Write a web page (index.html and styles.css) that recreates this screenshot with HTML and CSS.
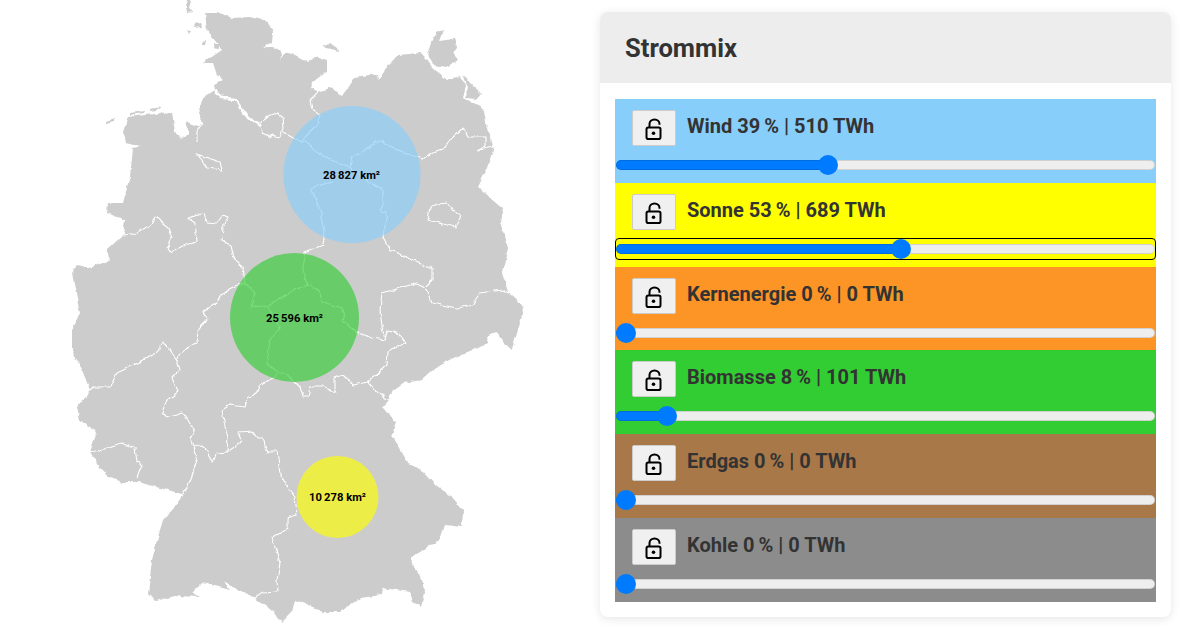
FILE: index.html
```html
<!DOCTYPE html>
<html>
<head>
  <title>Strommix</title>
  <link rel="stylesheet" href="styles.css">
</head>
<body>

  <svg class="map" viewBox="0 0 600 630" width="600" height="630">
    <defs>
      <!-- roughens the straight segments into a coastline -->
      <filter id="rough" filterUnits="userSpaceOnUse" x="0" y="0" width="600" height="630">
        <feTurbulence type="fractalNoise" baseFrequency="0.11" numOctaves="3" seed="4"/>
        <feDisplacementMap in="SourceGraphic" scale="5" xChannelSelector="R" yChannelSelector="G"/>
      </filter>
    </defs>

    <g filter="url(#rough)">
      <!-- Germany -->
      <path class="land" d="M205 12L217 12L232 18L250 17L268 22L273 32L272 42L263 47L280 48L282 55L280 60L287 52L307 62L317 57L327 60L327 72L312 82L310 88L318 92L330 88L343 95L355 77L377 74L378 80L393 60L398 55L420 53L427 60L432 67L447 80L460 76L466 86L463 98L485 110L488 128L493 150L488 167L478 187L503 208L500 223L508 248L502 273L508 292L522 305L523 313L518 330L512 350L503 342L497 333L487 335L488 343L470 352L448 360L433 370L422 380L403 383L393 390L388 400L382 407L397 422L392 435L408 463L418 467L437 487L452 497L463 510L462 527L445 525L440 540L410 558L422 580L425 593L422 607L413 602L410 592L383 588L382 595L360 598L340 612L323 612L295 600L292 612L282 622L275 612L255 598L223 582L230 590L215 586L202 583L192 593L200 597L175 596L155 601L148 593L152 560L160 530L163 520L175 507L183 494L160 488L138 482L123 482L110 478L100 467L90 452L97 432L80 420L77 407L90 390L82 370L72 350L72 330L77 320L80 313L72 273L78 265L90 268L110 260L107 250L123 235L125 220L107 213L108 203L123 203L130 177L133 148L140 146L125 143L123 132L128 117L172 112L175 132L182 138L188 132L185 122L197 127L203 123L198 113L203 98L215 90L214 84L223 80L217 75L213 63L203 63L222 50L218 43L207 30Z"/>
      <path class="land" d="M432 43L437 32L443 30L439 40L455 38L457 47L453 52L458 60L447 67L433 65L428 55Z"/>
      <path class="land" d="M462 75L470 82L482 93L477 99L465 98L469 88Z"/>
      <path class="land" d="M323 47L330 43L337 48L338 52L328 49Z"/>
      <path class="land" d="M187 0L191 1L189 8L194 12L187 13L186 7Z"/>
      <path class="land" d="M193 24L200 23L202 27L194 28Z"/>
      <path class="land" d="M203 42L207 41L206 45L203 45Z"/>
      <path class="land" d="M214 44L221 44L218 49L213 48Z"/>
      <path class="land" d="M187 30L191 31L189 34Z"/>
      <path class="land" d="M106 122L115 119L114 122L106 124Z"/>
      <path class="land" d="M130 113L145 111L144 113L130 115Z"/>
      <path class="land" d="M150 109L160 107L160 109L150 111Z"/>

      <!-- Elbe and Weser -->
      <path class="river" d="M215 90L223 98L235 99L248 118L260 126"/>
      <path class="border" d="M197 142L197 131L203 123"/>

      <!-- Borders between the states -->
      <path class="border" d="M260 127L263 133L268 137L273 135L280 137L283 128L282 117L278 113L268 117L260 123Z"/>
      <path class="border" d="M197 154L208 158L220 162L222 170L207 168L202 160Z"/>
      <path class="border" d="M430 207L437 203L447 202L460 217L455 227L428 220Z"/>
      <path class="border" d="M283 132L293 138L302 142L308 142L313 150L327 158L340 163L350 167L352 157L360 153L375 143L382 142L393 148L408 154L422 159L433 152L445 148L452 138L463 128L468 137L485 137L485 147L478 151L492 147"/>
      <path class="border" d="M318 92L310 100L312 110L320 115L318 125L305 137L302 142"/>
      <path class="border" d="M333 182L310 188L317 200L322 217L325 233L323 245L305 252L302 267L307 285L318 290L322 302L342 308L345 315L343 320L358 333L372 338L385 340"/>
      <path class="border" d="M350 167L368 182L383 190L383 203L380 212L387 213L383 237L390 250L407 257L432 268L432 280L425 287L432 303L457 308L472 305L480 293L503 290L522 300"/>
      <path class="border" d="M425 287L417 283L393 290L382 293L380 310L382 327L385 340L387 330L397 332L405 343L388 352L387 365L368 382L380 395L388 400"/>
      <path class="border" d="M368 382L353 385L343 375L335 378L335 392L323 387L310 387L308 397L303 397L300 387L290 377L278 372L273 378L260 385L257 393L248 398L245 407L230 405L222 410L225 427L228 437L227 452L217 453L213 462L207 452L203 445L193 447"/>
      <path class="border" d="M307 285L290 292L268 307L258 305L250 308L255 293L245 283L235 287L220 295L217 303L202 312L208 320L198 330L197 342L180 353L177 360L168 347L162 342L157 352L140 362L117 373L110 387L93 387L90 390"/>
      <path class="border" d="M268 307L280 327L270 340L267 363L278 372"/>
      <path class="border" d="M245 283L243 267L233 257L230 245L222 240L223 227L228 217L223 215L217 223L207 222L205 213L188 218L195 223L197 242L185 245L170 252L167 248L172 238L168 227L155 217L150 225L137 233L123 235"/>
      <path class="border" d="M177 360L180 370L172 378L178 392L167 400L162 412L167 417L182 412L188 420L195 433L190 438L197 460L188 487L183 494"/>
      <path class="border" d="M89 452L103 450L120 443L135 448L137 462L142 465L137 478"/>
      <path class="border" d="M227 452L242 442L238 433L253 432L257 438L263 438L267 452L277 452L280 473L287 487L295 497L297 515L287 518L287 528L272 538L280 563L277 580L278 592L263 593L255 598"/>
    </g>

    <circle class="area area-wind" cx="352" cy="174.500" r="68.500"/>
    <circle class="area area-biomass" cx="294.500" cy="317.500" r="64.500"/>
    <circle class="area area-solar" cx="337.500" cy="497" r="41"/>
    <text class="area-label" x="351.500" y="179">28&#8201;827 km²</text>
    <text class="area-label" x="294.500" y="322">25&#8201;596 km²</text>
    <text class="area-label" x="337.500" y="501">10&#8201;278 km²</text>
  </svg>

  <section class="panel">
    <header class="panel-header">
      <h2>Strommix</h2>
    </header>
    <div class="panel-body">

      <div class="source wind">
        <div class="source-head">
          <button class="lock" type="button">
            <svg viewBox="0 0 24 24" width="24" height="24"><rect x="5.500" y="9.500" width="14" height="11.500" rx="1.800"/><path d="M8.500 9.500V6a5 4.600 0 0 1 10 0v.7"/><circle class="lock-dot" cx="12.500" cy="15.200" r="1.800"/></svg>
          </button>
          <span class="source-label">Wind 39&#8201;% | 510 TWh</span>
        </div>
        <input class="slider" type="range" min="0" max="100" step="0.1" value="38.9" style="--v:.389">
      </div>

      <div class="source sun">
        <div class="source-head">
          <button class="lock" type="button">
            <svg viewBox="0 0 24 24" width="24" height="24"><rect x="5.500" y="9.500" width="14" height="11.500" rx="1.800"/><path d="M8.500 9.500V6a5 4.600 0 0 1 10 0v.7"/><circle class="lock-dot" cx="12.500" cy="15.200" r="1.800"/></svg>
          </button>
          <span class="source-label">Sonne 53&#8201;% | 689 TWh</span>
        </div>
        <input class="slider is-focused" type="range" min="0" max="100" step="0.1" value="53" style="--v:.53">
      </div>

      <div class="source nuclear">
        <div class="source-head">
          <button class="lock" type="button">
            <svg viewBox="0 0 24 24" width="24" height="24"><rect x="5.500" y="9.500" width="14" height="11.500" rx="1.800"/><path d="M8.500 9.500V6a5 4.600 0 0 1 10 0v.7"/><circle class="lock-dot" cx="12.500" cy="15.200" r="1.800"/></svg>
          </button>
          <span class="source-label">Kernenergie 0&#8201;% | 0 TWh</span>
        </div>
        <input class="slider" type="range" min="0" max="100" step="0.1" value="0" style="--v:0">
      </div>

      <div class="source biomass">
        <div class="source-head">
          <button class="lock" type="button">
            <svg viewBox="0 0 24 24" width="24" height="24"><rect x="5.500" y="9.500" width="14" height="11.500" rx="1.800"/><path d="M8.500 9.500V6a5 4.600 0 0 1 10 0v.7"/><circle class="lock-dot" cx="12.500" cy="15.200" r="1.800"/></svg>
          </button>
          <span class="source-label">Biomasse 8&#8201;% | 101 TWh</span>
        </div>
        <input class="slider" type="range" min="0" max="100" step="0.1" value="7.9" style="--v:.079">
      </div>

      <div class="source gas">
        <div class="source-head">
          <button class="lock" type="button">
            <svg viewBox="0 0 24 24" width="24" height="24"><rect x="5.500" y="9.500" width="14" height="11.500" rx="1.800"/><path d="M8.500 9.500V6a5 4.600 0 0 1 10 0v.7"/><circle class="lock-dot" cx="12.500" cy="15.200" r="1.800"/></svg>
          </button>
          <span class="source-label">Erdgas 0&#8201;% | 0 TWh</span>
        </div>
        <input class="slider" type="range" min="0" max="100" step="0.1" value="0" style="--v:0">
      </div>

      <div class="source coal">
        <div class="source-head">
          <button class="lock" type="button">
            <svg viewBox="0 0 24 24" width="24" height="24"><rect x="5.500" y="9.500" width="14" height="11.500" rx="1.800"/><path d="M8.500 9.500V6a5 4.600 0 0 1 10 0v.7"/><circle class="lock-dot" cx="12.500" cy="15.200" r="1.800"/></svg>
          </button>
          <span class="source-label">Kohle 0&#8201;% | 0 TWh</span>
        </div>
        <input class="slider" type="range" min="0" max="100" step="0.1" value="0" style="--v:0">
      </div>

    </div>
  </section>

</body>
</html>
```
FILE: styles.css
```css
body {
  font-family: Roboto, "Liberation Sans", sans-serif;
  background-color: white;
  color: #333;
  margin: 0;
  display: flex;
  align-items: flex-start;
  height: 630px;
  overflow: hidden;
}

.map {
  flex: none;
  display: block;
}

.land {
  fill: #ccc;
}

.river {
  fill: none;
  stroke: white;
  stroke-width: 2.500;
  stroke-linejoin: round;
}

.border {
  fill: none;
  stroke: white;
  stroke-width: 1.100;
  stroke-linejoin: round;
}

.area {
  fill-opacity: 0.65;
}

.area-wind {
  fill: #87cefa;
}

.area-biomass {
  fill: #32cd32;
}

.area-solar {
  fill: #ffff00;
}

.area-label {
  font-size: 11.200px;
  font-weight: 700;
  fill: black;
  text-anchor: middle;
}

.panel {
  flex: none;
  width: 571px;
  margin-top: 12px;
  background-color: white;
  border-radius: 8px;
  box-shadow: 0 2px 10px rgba(0, 0, 0, 0.1);
  overflow: hidden;
}

.panel-header {
  background-color: #ededed;
  height: 71px;
  display: flex;
  align-items: center;
  padding-left: 25px;
}

.panel-header h2 {
  margin: 0;
  font-size: 25.600px;
  font-weight: 700;
}

.panel-body {
  padding: 16px 15px 15px;
}

.source {
  height: 83.800px;
  padding: 11px 1px 0;
  box-sizing: border-box;
}

.wind { background-color: #87cefa; }
.sun { background-color: #ffff00; }
.nuclear { background-color: #fc9426; }
.biomass { background-color: #32cd32; }
.gas { background-color: #a97848; }
.coal { background-color: #8c8c8c; }

.source-head {
  display: flex;
  align-items: center;
  gap: 11px;
  padding-left: 16px;
  height: 36px;
}

.source-label {
  font-size: 20px;
  font-weight: 700;
  padding-bottom: 4px;
}

.lock {
  width: 44px;
  height: 36px;
  padding: 0 2px 0 0;
  background-color: #f0f0f0;
  border: 1px solid #ccc;
  border-radius: 2px;
  display: flex;
  align-items: center;
  justify-content: center;
}

.lock svg {
  fill: none;
  stroke: black;
  stroke-width: 2;
  margin-top: 4px;
}

.lock .lock-dot {
  fill: black;
  stroke: none;
}

.slider {
  -webkit-appearance: none;
  appearance: none;
  display: block;
  width: 539px;
  height: 20px;
  margin: 9px 0 0;
  padding: 0;
  background: transparent;
  border-radius: 3px;
}

.slider.is-focused {
  outline: 1.500px solid black;
  outline-offset: 0.500px;
}

.slider::-webkit-slider-runnable-track {
  height: 10px;
  border-radius: 5px;
  box-shadow: inset 0 0 0 1px rgba(0, 0, 0, 0.12);
  background: linear-gradient(to right, #007bff calc(10px + (100% - 20px) * var(--v)), #eee 0);
}

.slider::-webkit-slider-thumb {
  -webkit-appearance: none;
  appearance: none;
  width: 20px;
  height: 20px;
  margin-top: -5px;
  border-radius: 50%;
  background-color: #007bff;
}
```
